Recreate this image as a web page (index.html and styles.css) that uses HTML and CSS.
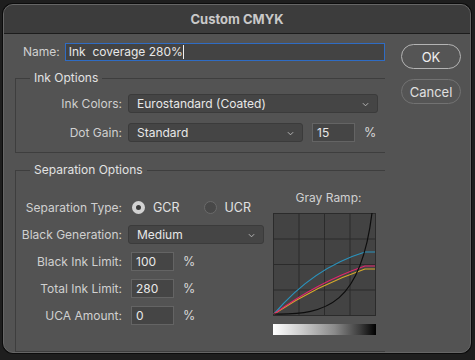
FILE: index.html
```html
<!DOCTYPE html>
<html lang="en">
<head>
    <meta charset="UTF-8">
    <title>Custom CMYK</title>
    <link rel="stylesheet" href="styles.css">
</head>
<body>
    <div class="window">
        <div class="titlebar">Custom CMYK</div>

        <div class="content">
            <div class="main">
                <!-- Name -->
                <div class="name-row">
                    <label class="name-label">Name:</label>
                    <div class="text-field name-field">Ink&nbsp; coverage 280%<span class="caret"></span></div>
                </div>

                <!-- Ink options -->
                <fieldset class="group ink-group">
                    <legend>Ink Options</legend>
                    <div class="row">
                        <label class="row-label">Ink Colors:</label>
                        <div class="select ink-select">Eurostandard (Coated)<svg class="chev" viewBox="0 0 8 5"><path d="M1 1l3 3 3-3"/></svg></div>
                    </div>
                    <div class="row">
                        <label class="row-label">Dot Gain:</label>
                        <div class="select gain-select">Standard<svg class="chev" viewBox="0 0 8 5"><path d="M1 1l3 3 3-3"/></svg></div>
                        <div class="text-field small-field">15</div>
                        <span class="unit">%</span>
                    </div>
                </fieldset>

                <!-- Separation options -->
                <fieldset class="group sep-group">
                    <legend>Separation Options</legend>
                    <div class="sep-body">
                        <div class="sep-left">
                            <div class="row sep-type">
                                <label class="row-label">Separation Type:</label>
                                <span class="radio checked"></span><span class="radio-text">GCR</span>
                                <span class="radio"></span><span class="radio-text">UCR</span>
                            </div>
                            <div class="row">
                                <label class="row-label">Black Generation:</label>
                                <div class="select gen-select">Medium<svg class="chev" viewBox="0 0 8 5"><path d="M1 1l3 3 3-3"/></svg></div>
                            </div>
                            <div class="row">
                                <label class="row-label">Black Ink Limit:</label>
                                <div class="text-field small-field limit-field">100</div>
                                <span class="unit">%</span>
                            </div>
                            <div class="row">
                                <label class="row-label">Total Ink Limit:</label>
                                <div class="text-field small-field limit-field">280</div>
                                <span class="unit">%</span>
                            </div>
                            <div class="row">
                                <label class="row-label">UCA Amount:</label>
                                <div class="text-field small-field limit-field">0</div>
                                <span class="unit">%</span>
                            </div>
                        </div>

                        <div class="sep-right">
                            <div class="ramp-title">Gray Ramp:</div>
                            <svg class="ramp" viewBox="0 0 103 103">
                                <rect x="0.5" y="0.5" width="102" height="102" fill="#434343" stroke="#2b2b2b"/>
                                <path d="M26 0V103M51.5 0V103M77 0V103M0 26H103M0 51.5H103M0 77H103" stroke="#2b2b2b" stroke-width="1"/>
                                <path d="M1 101 Q40 55 92 39 H102" fill="none" stroke="#2a93bd" stroke-width="1.2"/>
                                <path d="M1 101 Q45 72 92 56 H102" fill="none" stroke="#d6aa2c" stroke-width="1.2"/>
                                <path d="M1 101 Q45 69 92 53 H102" fill="none" stroke="#e1246e" stroke-width="1.2"/>
                                <path d="M1 101 C55 102 88 90 99 0" fill="none" stroke="#0d0d0d" stroke-width="1.2"/>
                            </svg>
                            <div class="gradient"></div>
                        </div>
                    </div>
                </fieldset>
            </div>

            <div class="buttons">
                <button class="btn btn-default">OK</button>
                <button class="btn">Cancel</button>
            </div>
        </div>
    </div>
</body>
</html>
```

FILE: styles.css
```css
html, body {
    margin: 0;
    padding: 0;
    height: 100%;
    overflow: hidden;
    background-color: #1e1e1e;
}

body {
    padding: 4px 0 0 3px;
    font-family: Inter, "Noto Sans", sans-serif;
    font-size: 12px;
    color: #d0d0d0;
}

.window {
    box-sizing: border-box;
    width: 468px;
    height: 349px;
    background-color: #535353;
    border: 1px solid #666666;
    border-radius: 10px;
    box-shadow: 0 0 0 1px #0c0c0c;
    overflow: hidden;
}

.titlebar {
    height: 28px;
    line-height: 28px;
    background-color: #3c3c3c;
    border-bottom: 1px solid #1c1c1c;
    text-align: center;
    font-size: 13px;
    font-weight: bold;
    color: #c9c9c9;
}

.content {
    display: flex;
    gap: 16px;
    padding: 9px 9px 0 11px;
}

.main {
    width: 370px;
}

/* name row */
.name-row {
    display: flex;
    align-items: center;
    gap: 5px;
    padding-left: 8px;
}

.name-label {
    line-height: 18px;
}

.text-field {
    box-sizing: border-box;
    height: 19px;
    line-height: 17px;
    padding: 0 4px;
    background-color: #454545;
    border: 1px solid #646464;
    color: #e8e8e8;
}

.name-field {
    flex: 1;
    height: 18px;
    line-height: 16px;
    padding-left: 3px;
    border-color: #2f6cc4;
    background-color: #434343;
}

.caret {
    display: inline-block;
    width: 1px;
    height: 14px;
    background-color: #f0f0f0;
    vertical-align: -3px;
}

/* groups */
.group {
    margin: 9px 0 0;
    padding: 0;
    min-width: 0;
    border: 1px solid #3e3e3e;
    border-right: 0;
}

.group legend {
    margin-left: 14px;
    padding: 0 4px;
    line-height: 16px;
    color: #e2e2e2;
}

.ink-group {
    padding: 8px 0 10px;
}

.row {
    display: flex;
    align-items: center;
    height: 19px;
}

.ink-group .row + .row {
    margin-top: 10px;
}

.row-label {
    width: 106px;
    margin-right: 6px;
    text-align: right;
    white-space: nowrap;
}

.select {
    box-sizing: border-box;
    height: 19px;
    line-height: 17px;
    padding: 0 8px 0 8px;
    display: flex;
    align-items: center;
    justify-content: space-between;
    background-color: #454545;
    border: 1px solid #3b3b3b;
    border-radius: 3px;
    color: #e8e8e8;
}

.chev {
    width: 7px;
    height: 5px;
    margin-top: 2px;
    fill: none;
    stroke: #b8b8b8;
    stroke-width: 1.1;
}

.ink-select {
    width: 250px;
}

.gain-select {
    width: 175px;
}

.small-field {
    width: 43px;
    margin-left: 9px;
}

.unit {
    margin-left: 9px;
    font-size: 12.5px;
    color: #d8d8d8;
}

/* separation */
.sep-body {
    display: flex;
    gap: 7px;
    padding-bottom: 16px;
}

.sep-left {
    width: 250px;
    padding-top: 20px;
}

.sep-left .row + .row {
    margin-top: 8px;
}

.sep-type {
    margin-bottom: 2px;
}

.radio {
    box-sizing: border-box;
    width: 13px;
    height: 13px;
    margin-left: 4px;
    border-radius: 50%;
    background-color: #484848;
    border: 1px solid #6a6a6a;
}

.radio + .radio-text + .radio {
    margin-left: 24px;
}

.radio.checked {
    border: 4px solid #d2d2d2;
    background-color: #3a3a3a;
}

.radio-text {
    margin-left: 8px;
    font-size: 12.5px;
    color: #e2e2e2;
}

.gen-select {
    width: 136px;
}

.limit-field {
    margin-left: 3px;
}

.sep-right {
    width: 103px;
    padding-top: 12px;
}

.ramp-title {
    line-height: 16px;
    text-align: center;
    margin-bottom: 7px;
    margin-left: 8px;
}

.ramp {
    display: block;
    width: 103px;
    height: 103px;
}

.gradient {
    height: 11px;
    margin-top: 8px;
    background: linear-gradient(to right, #ffffff 0%, #c8c8c8 30%, #8a8a8a 60%, #3a3a3a 85%, #000000 100%);
}

/* buttons */
.buttons {
    display: flex;
    flex-direction: column;
    gap: 10px;
    padding-top: 1px;
}

.btn {
    box-sizing: border-box;
    width: 60px;
    height: 25px;
    border-radius: 13px;
    background-color: #555555;
    border: 1px solid #727272;
    color: #e0e0e0;
    font-family: Inter, "Noto Sans", sans-serif;
    font-size: 13px;
    padding: 0;
}

.btn-default {
    border: 1.5px solid #b4b4b4;
    color: #f0f0f0;
}
```
